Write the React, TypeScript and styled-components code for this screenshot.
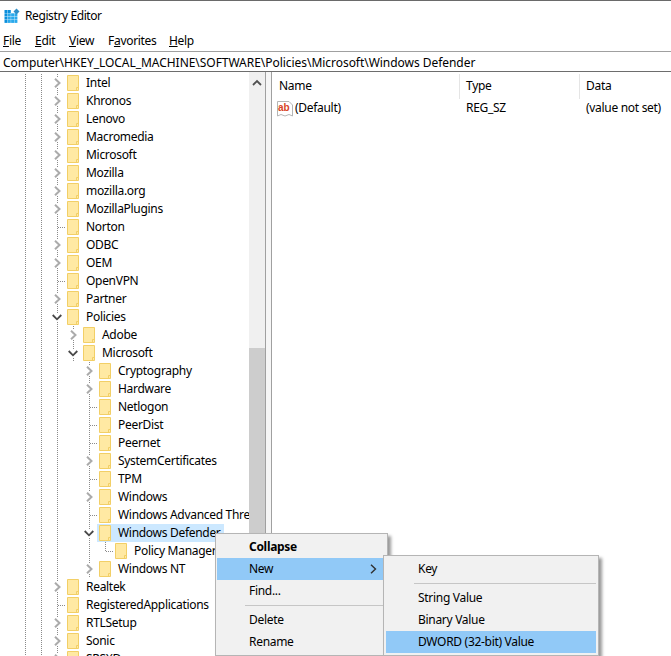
import React from "react";
import styled, { createGlobalStyle } from "styled-components";

const Global = createGlobalStyle`
  html, body { margin: 0; padding: 0; background: #fff; }
  body { font-family: "Noto Sans", "Open Sans", sans-serif; font-size: 12px; color: #000; letter-spacing: -0.3px; }
`;

const Window = styled.div`
  position: relative;
  width: 671px;
  height: 656px;
  overflow: hidden;
  background: #fff;
  display: flex;
  flex-direction: column;
  border-top: 1px solid #6a6a6a;
  box-sizing: border-box;
`;
const TitleBar = styled.div`
  height: 30px;
  display: flex;
  align-items: center;
  gap: 5px;
  padding: 0 0 0 4px;
  flex: none;
`;
const TitleText = styled.span`
  padding-bottom: 2px;
  letter-spacing: -0.4px;
`;
const MenuBar = styled.div`
  height: 20px;
  display: flex;
  align-items: center;
  flex: none;
  padding-bottom: 2px;
  box-sizing: border-box;
`;
const MenuEntry = styled.span<{ $w: number }>`
  width: ${(p) => p.$w}px;
  padding-left: 3px;
  box-sizing: border-box;
  u { text-decoration: underline; text-underline-offset: 1px; }
`;
const AddressBar = styled.div`
  flex: none;
  display: flex;
  align-items: center;
  padding: 1px 0 0 3px;
  height: 18px;
  border-top: 1px solid #a0a0a0;
  border-bottom: 1px solid #6d6d6d;
  white-space: nowrap;
  letter-spacing: -0.04px;
`;
const Body = styled.div`
  flex: 1;
  display: flex;
  min-height: 0;
`;
const TreePane = styled.div`
  width: 266px;
  flex: none;
  display: flex;
  border-right: 1px solid #a0a0a0;
  box-sizing: border-box;
`;
const TreeList = styled.div`
  width: 249px;
  flex: none;
  padding: 2px 0 0 17px;
  box-sizing: border-box;
  overflow: hidden;
`;
const Row = styled.div`
  display: flex;
  height: 18px;
  align-items: stretch;
`;
const Guide = styled.span<{ $on?: boolean }>`
  position: relative;
  width: 16px;
  flex: none;
  background: ${(p) =>
    p.$on
      ? "repeating-linear-gradient(to bottom, #8a8a8a 0 1px, transparent 1px 2px) 8px 0 / 1px 100% no-repeat"
      : "none"};
`;
const Branch = styled(Guide)<{ $end?: boolean }>`
  background: repeating-linear-gradient(to bottom, #8a8a8a 0 1px, transparent 1px 2px) 8px 0 / 1px ${(p) => (p.$end ? "9px" : "100%")} no-repeat;
  &::after {
    content: "";
    position: absolute;
    left: 9px;
    top: 9px;
    width: 7px;
    height: 1px;
    background: repeating-linear-gradient(to right, #8a8a8a 0 1px, transparent 1px 2px);
  }
`;
const Expander = styled(Guide)`
  display: flex;
  align-items: center;
  justify-content: center;
  svg {
    background: #fff;
    display: block;
  }
`;
const Item = styled.span<{ $selected?: boolean; $width?: number }>`
  display: flex;
  align-items: center;
  flex: none;
  gap: 7px;
  padding-left: 2px;
  white-space: nowrap;
  background: ${(p) => (p.$selected ? "#cce8ff" : "transparent")};
  width: ${(p) => (p.$width ? `${p.$width}px` : "auto")};
  box-sizing: border-box;
`;
const ItemLabel = styled.span`
  padding-bottom: 2px;
`;
const ScrollTrack = styled.div`
  width: 16px;
  flex: none;
  background: #f0f0f0;
  display: flex;
  flex-direction: column;
  align-items: center;
`;
const ScrollArrow = styled.div`
  height: 17px;
  width: 16px;
  display: flex;
  align-items: center;
  justify-content: center;
  padding-top: 2px;
  flex: none;
`;
const ScrollThumb = styled.div`
  margin-top: 257px;
  width: 16px;
  flex: 1;
  background: #cdcdcd;
`;
const Splitter = styled.div`
  width: 5px;
  flex: none;
  background: #f6f6f6;
`;
const ListPane = styled.div`
  flex: 1;
  border-left: 1px solid #a0a0a0;
  display: flex;
  flex-direction: column;
`;
const ListHeader = styled.div`
  display: grid;
  grid-template-columns: 188px 120px 1fr;
  height: 25px;
  margin-top: 2px;
  align-items: stretch;
`;
const HeaderCell = styled.div`
  display: flex;
  align-items: center;
  padding: 0 0 2px 6px;
  border-right: 1px solid #e5e5e5;
  &:first-child { padding-left: 7px; }
  &:last-child { border-right: 0; }
`;
const ListRow = styled.div`
  display: grid;
  grid-template-columns: 188px 120px 1fr;
  height: 18px;
  align-items: center;
`;
const NameCell = styled.div`
  display: flex;
  align-items: center;
  gap: 2px;
  padding-left: 5px;
`;
const CellText = styled.span`
  padding-bottom: 2px;
`;
const ValueCell = styled.div`
  padding: 0 0 2px 6px;
`;
const IconText = styled.text`
  font-family: "Liberation Sans", sans-serif;
  font-size: 10px;
  font-weight: 700;
  letter-spacing: 0;
  fill: #d8431f;
`;
const Menu = styled.div<{ $left: number; $top: number; $width: number; $padLeft: number }>`
  position: absolute;
  left: ${(p) => p.$left}px;
  top: ${(p) => p.$top}px;
  width: ${(p) => p.$width}px;
  box-sizing: border-box;
  background: #f1f1f1;
  border: 1px solid #b5b5b5;
  padding: 2px 2px 2px ${(p) => p.$padLeft}px;
  box-shadow: 3px 3px 3px rgba(0, 0, 0, 0.4);
`;
const MenuItem = styled.div<{ $active?: boolean; $bold?: boolean; $indent: number }>`
  position: relative;
  height: 22px;
  box-sizing: border-box;
  display: flex;
  align-items: center;
  padding: 0 0 2px ${(p) => p.$indent}px;
  font-weight: ${(p) => (p.$bold ? 700 : 400)};
  background: ${(p) => (p.$active ? "#91c9f7" : "transparent")};
`;
const SubArrow = styled.span`
  position: absolute;
  right: 8px;
  top: 6px;
  display: flex;
`;
const Separator = styled.div<{ $indent: number }>`
  height: 1px;
  margin: 3px 0 3px ${(p) => p.$indent}px;
  background: #c6c6c6;
`;

const RegIcon = () => (
  <svg width="16" height="16" viewBox="0 0 16 16">
    {[0, 1, 2, 3].map((r) =>
      [0, 1, 2, 3].map((c) =>
        r === 0 && c >= 2 ? null : (
          <rect
            key={`${r}${c}`}
            x={0.5 + c * 3.3}
            y={2 + r * 3.3}
            width="3"
            height="3"
            fill={r === 0 || c === 0 ? "#0a8fdc" : "#2aa9ec"}
          />
        )
      )
    )}
    <path d="M12.5 0.5 L15.5 3.5 L12.5 6.5 L9.5 3.5 Z" fill="#2f8fc7" />
  </svg>
);
const Folder = () => (
  <svg width="12" height="16" viewBox="0 0 12 16" style={{ flex: "none" }}>
    <path d="M.5 .5H11.5V15.5H.5Z" fill="#ffe9a3" stroke="#f2cf66" />
    <path d="M9.5 15.5V12.5H11.5" fill="none" stroke="#f2cf66" />
  </svg>
);
const Right = ({ color = "#ababab", weight = 2 }: { color?: string; weight?: number }) => (
  <svg width="7" height="10" viewBox="0 0 7 10">
    <path d="M1 .7L5.5 5L1 9.3" fill="none" stroke={color} strokeWidth={weight} />
  </svg>
);
const Down = () => (
  <svg width="10" height="7" viewBox="0 0 10 7">
    <path d="M.7 1L5 5.3L9.3 1" fill="none" stroke="#484848" strokeWidth="1.8" />
  </svg>
);

type Kind = "closed" | "open" | "leaf" | "lastLeaf";
type Node = { name: string; level: number; kind: Kind; selected?: boolean };

const nodes: Node[] = [
  ...["Intel", "Khronos", "Lenovo", "Macromedia", "Microsoft", "Mozilla", "mozilla.org", "MozillaPlugins"].map((name) => ({ name, level: 0, kind: "closed" as Kind })),
  { name: "Norton", level: 0, kind: "leaf" },
  { name: "ODBC", level: 0, kind: "closed" },
  { name: "OEM", level: 0, kind: "closed" },
  { name: "OpenVPN", level: 0, kind: "leaf" },
  { name: "Partner", level: 0, kind: "closed" },
  { name: "Policies", level: 0, kind: "open" },
  { name: "Adobe", level: 1, kind: "closed" },
  { name: "Microsoft", level: 1, kind: "open" },
  { name: "Cryptography", level: 2, kind: "closed" },
  { name: "Hardware", level: 2, kind: "closed" },
  { name: "Netlogon", level: 2, kind: "leaf" },
  { name: "PeerDist", level: 2, kind: "leaf" },
  { name: "Peernet", level: 2, kind: "leaf" },
  { name: "SystemCertificates", level: 2, kind: "closed" },
  { name: "TPM", level: 2, kind: "leaf" },
  { name: "Windows", level: 2, kind: "closed" },
  { name: "Windows Advanced Threat Protection", level: 2, kind: "leaf" },
  { name: "Windows Defender", level: 2, kind: "open", selected: true },
  { name: "Policy Manager", level: 3, kind: "lastLeaf" },
  { name: "Windows NT", level: 2, kind: "closed" },
  { name: "Realtek", level: 0, kind: "closed" },
  { name: "RegisteredApplications", level: 0, kind: "leaf" },
  { name: "RTLSetup", level: 0, kind: "closed" },
  { name: "Sonic", level: 0, kind: "closed" },
  { name: "SRSXD", level: 0, kind: "closed" },
];

const guidesFor = (n: Node) => {
  const g = [true, true];
  if (n.level >= 1) g.push(true);
  if (n.level >= 2) g.push(false);
  if (n.level >= 3) g.push(true);
  return g;
};

const TreeRow = ({ node }: { node: Node }) => (
  <Row>
    {guidesFor(node).map((on, k) => (
      <Guide key={k} $on={on} />
    ))}
    {node.kind === "leaf" && <Branch />}
    {node.kind === "lastLeaf" && <Branch $end />}
    {node.kind === "closed" && (
      <Expander $on>
        <Right />
      </Expander>
    )}
    {node.kind === "open" && (
      <Expander $on>
        <Down />
      </Expander>
    )}
    <Item $selected={node.selected} $width={node.selected ? 127 : undefined}>
      <Folder />
      <ItemLabel>{node.name}</ItemLabel>
    </Item>
  </Row>
);

export default function App() {
  return (
    <>
      <Global />
      <Window>
        <TitleBar>
          <RegIcon />
          <TitleText>Registry Editor</TitleText>
        </TitleBar>
        <MenuBar>
          <MenuEntry $w={32}><u>F</u>ile</MenuEntry>
          <MenuEntry $w={34}><u>E</u>dit</MenuEntry>
          <MenuEntry $w={39}><u>V</u>iew</MenuEntry>
          <MenuEntry $w={61}>F<u>a</u>vorites</MenuEntry>
          <MenuEntry $w={40}><u>H</u>elp</MenuEntry>
        </MenuBar>
        <AddressBar>Computer\HKEY_LOCAL_MACHINE\SOFTWARE\Policies\Microsoft\Windows Defender</AddressBar>
        <Body>
          <TreePane>
            <TreeList>
              {nodes.map((n, i) => (
                <TreeRow key={i} node={n} />
              ))}
            </TreeList>
            <ScrollTrack>
              <ScrollArrow>
                <svg width="10" height="7" viewBox="0 0 10 7">
                  <path d="M1 6L5 2L9 6" fill="none" stroke="#505050" strokeWidth="1.8" />
                </svg>
              </ScrollArrow>
              <ScrollThumb />
            </ScrollTrack>
          </TreePane>
          <Splitter />
          <ListPane>
            <ListHeader>
              <HeaderCell>Name</HeaderCell>
              <HeaderCell>Type</HeaderCell>
              <HeaderCell>Data</HeaderCell>
            </ListHeader>
            <ListRow>
              <NameCell>
                <svg width="16" height="16" viewBox="0 0 16 16">
                  <path d="M.5 .5H12L15.5 4V15L12 13.5L8 15L4 13.5L.5 15Z" fill="#fff" stroke="#b5b5b5" />
                  <IconText x="1" y="9.5">ab</IconText>
                </svg>
                <CellText>(Default)</CellText>
              </NameCell>
              <ValueCell>REG_SZ</ValueCell>
              <ValueCell>(value not set)</ValueCell>
            </ListRow>
          </ListPane>
        </Body>
        <Menu $left={215} $top={532} $width={173} $padLeft={1}>
          <MenuItem $bold $indent={32}>Collapse</MenuItem>
          <MenuItem $active $indent={32}>
            New
            <SubArrow><Right color="#303030" weight={1.4} /></SubArrow>
          </MenuItem>
          <MenuItem $indent={32}>Find...</MenuItem>
          <Separator $indent={28} />
          <MenuItem $indent={32}>Delete</MenuItem>
          <MenuItem $indent={32}>Rename</MenuItem>
        </Menu>
        <Menu $left={383} $top={554} $width={216} $padLeft={2}>
          <MenuItem $indent={32}>Key</MenuItem>
          <Separator $indent={28} />
          <MenuItem $indent={32}>String Value</MenuItem>
          <MenuItem $indent={32}>Binary Value</MenuItem>
          <MenuItem $active $indent={32}>DWORD (32-bit) Value</MenuItem>
        </Menu>
      </Window>
    </>
  );
}
